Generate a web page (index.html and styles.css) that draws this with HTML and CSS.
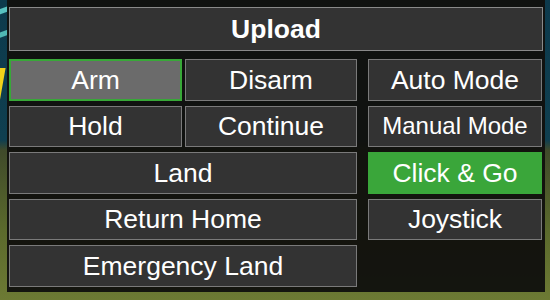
FILE: index.html
```html
<!DOCTYPE html>
<html lang="en">
<head>
    <meta charset="UTF-8">
    <title>Drone Control</title>
    <link rel="stylesheet" href="styles.css">
</head>
<body>
    <div class="panel">
        <button class="btn uploadButton">Upload</button>

        <div class="controls">
            <div class="commandGroup">
                <div class="pairRow">
                    <button class="btn active">Arm</button>
                    <button class="btn">Disarm</button>
                </div>
                <div class="pairRow">
                    <button class="btn">Hold</button>
                    <button class="btn">Continue</button>
                </div>
                <button class="btn">Land</button>
                <button class="btn">Return Home</button>
                <button class="btn">Emergency Land</button>
            </div>

            <div class="modeGroup">
                <button class="btn">Auto Mode</button>
                <button class="btn small">Manual Mode</button>
                <button class="btn selected">Click &amp; Go</button>
                <button class="btn">Joystick</button>
            </div>
        </div>
    </div>
</body>
</html>
```

FILE: styles.css
```css
body {
    margin: 0;
    width: 550px;
    height: 300px;
    overflow: hidden;
    font-family: "Liberation Sans", Arial, sans-serif;
    background:
        linear-gradient(160deg, transparent 0px, transparent 8px, #58c2c0 9px, #58c2c0 13px, transparent 14px, transparent 30px, #4fb8b4 31px, #4fb8b4 35px, transparent 36px) 0 0 / 8px 110px no-repeat,
        linear-gradient(100deg, #f2d21a 0px, #f2d21a 5px, transparent 6px) 0 68px / 8px 45px no-repeat,
        linear-gradient(180deg, #0d3a4c 0px, #0f3f50 140px, #3f4a2a 150px, #5b6a2c 230px, #6d7a34 300px);
}

.panel {
    margin-left: 7px;
    width: 538px;
    height: 292px;
    box-sizing: border-box;
    padding: 7px 2px 0 2px;
    background-color: rgba(17, 17, 14, 0.96);
    display: flex;
    flex-direction: column;
    gap: 8px;
}

.btn {
    box-sizing: border-box;
    height: 41.5px;
    margin: 0;
    padding: 0;
    background-color: #333333;
    color: white;
    border: 1px solid #7a7a7a;
    font-family: "Liberation Sans", Arial, sans-serif;
    font-size: 26.5px;
    line-height: 1;
    cursor: pointer;
}

.uploadButton {
    height: 44px;
    font-weight: bold;
    border-color: #8a8a8a;
}

.controls {
    display: flex;
    gap: 11px;
}

.commandGroup {
    width: 348px;
    display: flex;
    flex-direction: column;
    gap: 5px;
}

.pairRow {
    display: flex;
    gap: 3px;
}

.pairRow .btn {
    width: 173px;
}

.pairRow .btn + .btn {
    width: 172px;
}

.modeGroup {
    width: 174px;
    display: flex;
    flex-direction: column;
    gap: 5px;
}

.small {
    font-size: 24px;
}

.active {
    background-color: #6b6b6b;
    border: 2px solid #38a838;
}

.selected {
    background-color: #3aa63a;
    border-color: #3aa63a;
}
```
